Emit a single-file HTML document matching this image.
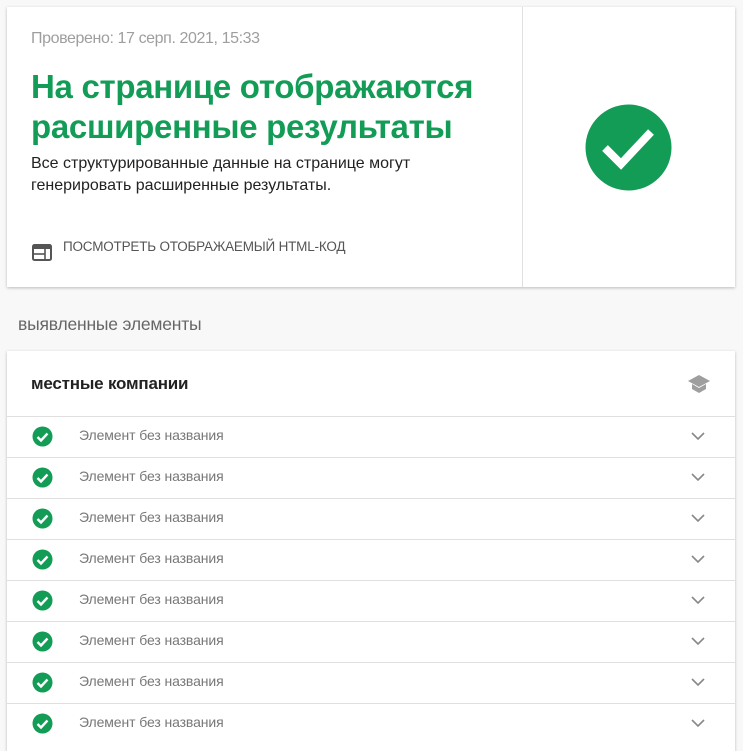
<!DOCTYPE html>
<html><head><meta charset="utf-8"><style>
body{margin:0;background:#f8f8f8;font-family:"Liberation Sans",sans-serif;width:743px;height:735px;overflow:hidden;position:relative}
.card{position:absolute;background:#fff;box-shadow:0 1px 3px rgba(0,0,0,.25)}
.c1{left:7px;top:7px;width:728px;height:280px}
.div{position:absolute;left:515px;top:0;width:1px;height:280px;background:#e0e0e0}
.date{position:absolute;left:24px;top:23px;font-size:16px;color:#9e9e9e;letter-spacing:-.4px}
.title{position:absolute;left:24px;top:60px;font-size:33px;font-weight:bold;line-height:40px;color:#129c56;letter-spacing:-.3px}
.desc{position:absolute;left:24px;top:146px;font-size:16px;line-height:22px;color:#222;letter-spacing:0}
.link{position:absolute;left:56px;top:232px;font-size:13.5px;color:#555;letter-spacing:-.2px}
.c2{left:7px;top:351px;width:728px;height:400px}
.h{position:absolute;left:24px;top:23px;font-size:17px;font-weight:bold;color:#222;letter-spacing:-.2px}
.sec{position:absolute;left:18px;top:314px;font-size:17.5px;color:#666;letter-spacing:-.2px}
.row{position:absolute;left:0;width:728px;height:41px;border-top:1px solid #e0e0e0}
.row span{position:absolute;left:72px;top:10px;font-size:14px;color:#777;letter-spacing:-.1px}
.row .ic{position:absolute;left:25px;top:9px}
.row .ch{position:absolute;left:684px;top:15px}
</style></head><body>
<div class="card c1">
<div class="date">Проверено: 17 серп. 2021, 15:33</div>
<div class="title">На странице отображаются<br>расширенные результаты</div>
<div class="desc">Все структурированные данные на странице могут<br>генерировать расширенные результаты.</div>
<svg style="position:absolute;left:25px;top:237px" width="20" height="17" viewBox="0 0 20 17"><rect x="1" y="1" width="18" height="15" rx="1.5" fill="none" stroke="#555" stroke-width="2"/><rect x="1" y="1" width="18" height="4" fill="#555"/><line x1="1" y1="10" x2="13" y2="10" stroke="#555" stroke-width="1.6"/><line x1="13" y1="5" x2="13" y2="16" stroke="#555" stroke-width="1.6"/></svg>
<div class="link">ПОСМОТРЕТЬ ОТОБРАЖАЕМЫЙ HTML-КОД</div>
<div class="div"></div>
<svg style="position:absolute;left:578px;top:97px" width="87" height="87" viewBox="0 0 87 87"><circle cx="43.5" cy="43.5" r="43" fill="#129c56"/><path d="M20 44 L36 60 L66 28" fill="none" stroke="#fff" stroke-width="8"/></svg>
</div>
<div class="sec">выявленные элементы</div>
<div class="card c2">
<div class="h">местные компании</div>
<svg style="position:absolute;left:680px;top:23px" width="24" height="20" viewBox="0 0 24 20"><path d="M12 1 L23 7 L12 13 L1 7Z" fill="#9e9e9e"/><path d="M5 10 V15 L12 19 L19 15 V10 L12 14Z" fill="#9e9e9e"/></svg>
<div class="row" style="top:65px"><svg class="ic" width="21" height="21"><circle cx="10.5" cy="10.5" r="10" fill="#129c56"/><path d="M5.5 11 L9 14.5 L15.5 7.5" fill="none" stroke="#fff" stroke-width="2.4"/></svg><span>Элемент без названия</span><svg class="ch" width="14" height="9"><path d="M1 1 L7 7 L13 1" fill="none" stroke="#888" stroke-width="1.6"/></svg></div>
<div class="row" style="top:106px"><svg class="ic" width="21" height="21"><circle cx="10.5" cy="10.5" r="10" fill="#129c56"/><path d="M5.5 11 L9 14.5 L15.5 7.5" fill="none" stroke="#fff" stroke-width="2.4"/></svg><span>Элемент без названия</span><svg class="ch" width="14" height="9"><path d="M1 1 L7 7 L13 1" fill="none" stroke="#888" stroke-width="1.6"/></svg></div>
<div class="row" style="top:147px"><svg class="ic" width="21" height="21"><circle cx="10.5" cy="10.5" r="10" fill="#129c56"/><path d="M5.5 11 L9 14.5 L15.5 7.5" fill="none" stroke="#fff" stroke-width="2.4"/></svg><span>Элемент без названия</span><svg class="ch" width="14" height="9"><path d="M1 1 L7 7 L13 1" fill="none" stroke="#888" stroke-width="1.6"/></svg></div>
<div class="row" style="top:188px"><svg class="ic" width="21" height="21"><circle cx="10.5" cy="10.5" r="10" fill="#129c56"/><path d="M5.5 11 L9 14.5 L15.5 7.5" fill="none" stroke="#fff" stroke-width="2.4"/></svg><span>Элемент без названия</span><svg class="ch" width="14" height="9"><path d="M1 1 L7 7 L13 1" fill="none" stroke="#888" stroke-width="1.6"/></svg></div>
<div class="row" style="top:229px"><svg class="ic" width="21" height="21"><circle cx="10.5" cy="10.5" r="10" fill="#129c56"/><path d="M5.5 11 L9 14.5 L15.5 7.5" fill="none" stroke="#fff" stroke-width="2.4"/></svg><span>Элемент без названия</span><svg class="ch" width="14" height="9"><path d="M1 1 L7 7 L13 1" fill="none" stroke="#888" stroke-width="1.6"/></svg></div>
<div class="row" style="top:270px"><svg class="ic" width="21" height="21"><circle cx="10.5" cy="10.5" r="10" fill="#129c56"/><path d="M5.5 11 L9 14.5 L15.5 7.5" fill="none" stroke="#fff" stroke-width="2.4"/></svg><span>Элемент без названия</span><svg class="ch" width="14" height="9"><path d="M1 1 L7 7 L13 1" fill="none" stroke="#888" stroke-width="1.6"/></svg></div>
<div class="row" style="top:311px"><svg class="ic" width="21" height="21"><circle cx="10.5" cy="10.5" r="10" fill="#129c56"/><path d="M5.5 11 L9 14.5 L15.5 7.5" fill="none" stroke="#fff" stroke-width="2.4"/></svg><span>Элемент без названия</span><svg class="ch" width="14" height="9"><path d="M1 1 L7 7 L13 1" fill="none" stroke="#888" stroke-width="1.6"/></svg></div>
<div class="row" style="top:352px"><svg class="ic" width="21" height="21"><circle cx="10.5" cy="10.5" r="10" fill="#129c56"/><path d="M5.5 11 L9 14.5 L15.5 7.5" fill="none" stroke="#fff" stroke-width="2.4"/></svg><span>Элемент без названия</span><svg class="ch" width="14" height="9"><path d="M1 1 L7 7 L13 1" fill="none" stroke="#888" stroke-width="1.6"/></svg></div>
</div>
</body></html>
